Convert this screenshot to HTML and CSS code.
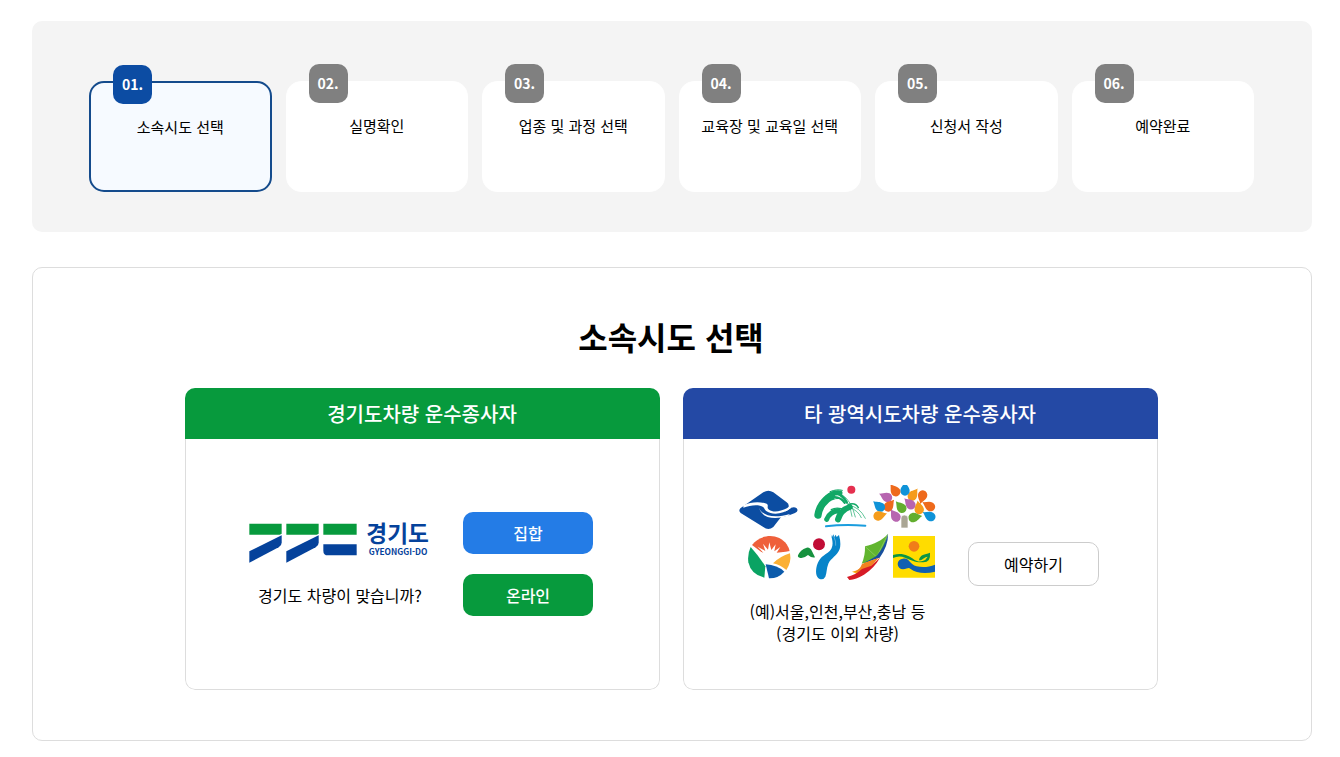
FILE: index.html
```html
<!DOCTYPE html>
<html lang="ko">
<head>
  <meta charset="UTF-8" />
  <meta name="viewport" content="width=device-width, initial-scale=1.0"/>
  <title>소속시도 선택</title>
  <link rel="stylesheet" href="styles.css">
</head>
<body>
  <div class="container">
    <ol class="steps">
      <li class="step active"><span class="num">01.</span>소속시도 선택</li>
      <li class="step"><span class="num">02.</span>실명확인</li>
      <li class="step"><span class="num">03.</span>업종 및 과정 선택</li>
      <li class="step"><span class="num">04.</span>교육장 및 교육일 선택</li>
      <li class="step"><span class="num">05.</span>신청서 작성</li>
      <li class="step"><span class="num">06.</span>예약완료</li>
    </ol>

    <main class="content">
      <h2>소속시도 선택</h2>
      <div class="cards">
        <section class="card">
          <h3 class="green">경기도차량 운수종사자</h3>
          <div class="card-body">
            <div class="info">
              <svg class="logo-gg" viewBox="27 39 546 123" role="img" aria-label="경기도">
                <g fill="#079a3d">
                  <path d="M28 41H125V71L119 74H28Z"/>
                  <path d="M139 41H236V71L230 74H139Z"/>
                  <path d="M250 41H350V74H250Z"/>
                </g>
                <g fill="#05429b">
                  <path d="M125 76V98Q125 107 116 112L28 158V124Z"/>
                  <path d="M236 76V98Q236 107 227 112L139 158V124Z"/>
                  <path d="M250 103H350V136H264Q250 136 250 122Z"/>
                  <text class="logo-name" x="379" y="96">경기도</text>
                  <text class="logo-sub" x="386" y="136">GYEONGGI-DO</text>
                </g>
              </svg>
              <p>경기도 차량이 맞습니까?</p>
            </div>
            <div class="buttons">
              <button class="button blue" type="button">집합</button>
              <button class="button green" type="button">온라인</button>
            </div>
          </div>
        </section>

        <section class="card">
          <h3 class="navy">타 광역시도차량 운수종사자</h3>
          <div class="card-body">
            <div class="info">
              <svg class="logo-city" viewBox="0 0 591 285" aria-hidden="true">
                <defs>
                  <path id="drop" d="M0 -24C3 -15 14 -8 14 4A14 14 0 0 1 -14 4C-14 -7 -5 -13 0 -24Z"/>
                </defs>

                <!-- diamond -->
                <g transform="translate(-15 -12)">
                  <path fill="#0c4da2" d="M88 34Q103 24 118 34L158 64Q167 70 163 80L118 138Q103 150 88 138L20 96Q12 88 20 81Z"/>
                  <path fill="#0c4da2" d="M76 78C96 100 134 104 163 86Q178 74 188 82Q195 91 183 96C160 106 134 112 108 110Z"/>
                  <path fill="#fff" d="M28 73C50 62 78 61 98 68C106 73 96 80 105 86C118 95 142 93 168 76L170 82C146 101 114 102 98 91C88 83 92 77 78 74C60 71 45 75 28 80Z"/>
                  <path fill="#fff" d="M74 76C80 104 118 114 168 99L162 105C118 117 82 112 74 76Z"/>
                </g>

                <!-- hills -->
                <g transform="translate(165 -12)" fill="none" stroke-linecap="round">
                  <path stroke="#12a866" stroke-width="22" d="M72 102C75 80 90 56 112 46"/>
                  <path stroke="#12a866" stroke-width="15" d="M98 50C112 38 126 34 138 36"/>
                  <path stroke="#12a866" stroke-width="3" d="M108 32C122 26 134 25 145 28M115 56Q138 46 152 60"/>
                  <path stroke="#12a866" stroke-width="8" d="M126 36C142 41 151 50 158 64"/>
                  <path stroke="#12a866" stroke-width="6" d="M118 48C134 46 145 55 152 66"/>
                  <path stroke="#12a866" stroke-width="15" d="M98 115C104 99 116 91 132 89"/>
                  <path stroke="#12a866" stroke-width="18" d="M132 115C138 96 152 83 167 78"/>
                  <path stroke="#12a866" stroke-width="4" d="M112 86Q124 79 142 83M163 70Q185 64 193 80"/>
                  <path stroke="#12a866" stroke-width="2" d="M145 42Q172 58 184 108M165 74Q196 76 214 112M168 80Q192 88 202 110M158 62Q172 82 174 106"/>
                  <path stroke="#1a9dde" stroke-width="6" d="M96 136Q150 129 214 134"/>
                  <circle fill="#e5304f" cx="172" cy="26" r="12"/>
                </g>

                <!-- tree -->
                <g transform="translate(285 -12)">
                  <use href="#drop" fill="#f59c1c" transform="translate(237 42) rotate(35)"/>
                  <use href="#drop" fill="#0f93d8" transform="translate(213 26)"/>
                  <use href="#drop" fill="#ee6a1c" transform="translate(183 29) rotate(-35)"/>
                  <use href="#drop" fill="#b765b0" transform="translate(157 48) rotate(-65)"/>
                  <use href="#drop" fill="#ee6a1c" transform="translate(265 46) rotate(195)"/>
                  <use href="#drop" fill="#b765b0" transform="translate(228 69) rotate(-45)"/>
                  <use href="#drop" fill="#ee6a1c" transform="translate(165 75) rotate(40)"/>
                  <use href="#drop" fill="#62ae2e" transform="translate(201 79) rotate(-40)"/>
                  <use href="#drop" fill="#0f93d8" transform="translate(136 76) rotate(-50)"/>
                  <use href="#drop" fill="#f59c1c" transform="translate(136 104) rotate(75)"/>
                  <use href="#drop" fill="#b765b0" transform="translate(184 105) rotate(-35)"/>
                  <use href="#drop" fill="#f59c1c" transform="translate(255 82) rotate(-10)"/>
                  <use href="#drop" fill="#ee6a1c" transform="translate(286 75) rotate(-60)"/>
                  <use href="#drop" fill="#0f93d8" transform="translate(287 105) rotate(-60)"/>
                  <use href="#drop" fill="#62ae2e" transform="translate(241 109) rotate(80)"/>
                  <path fill="#aaa695" stroke="#fff" stroke-width="2" d="M201 141V111Q201 102 211 102Q222 102 222 111V141Z"/>
                </g>

                <!-- sunrise -->
                <g transform="translate(-15 -12)">
                  <path fill="#ef603b" d="M54 192C80 158 133 155 158 190Q165 200 167 211L120 221L90 219Z"/>
                  <path fill="#fff" d="M58 206L88 215L71 197L94 210L87 188L102 206L106 184L112 207L125 190L121 211L139 198L128 215L168 211L170 222L120 248H92Z"/>
                  <path fill="#0aa363" d="M50 198Q72 222 94 256L91 290Q51 281 43 244Q40 218 50 198Z"/>
                  <path fill="#fbb034" d="M168 217Q173 244 157 267Q140 252 117 247Q138 226 168 217Z"/>
                  <path fill="#0c5bab" d="M95 250Q130 252 151 272Q132 293 105 292Z"/>
                </g>

                <!-- dancer -->
                <g transform="translate(165 138)">
                  <circle fill="#c10d36" cx="75" cy="40" r="18"/>
                  <path fill="#16923f" d="M12 73Q18 57 38 50Q48 48 54 61L63 79Q54 82 42 72Q29 83 19 81Q10 79 12 73Z"/>
                  <path fill="#0784c9" d="M110 10L114 18L118 10L121 18L125 11L128 18L135 12Q142 38 137 54C130 74 112 80 103 98C97 112 99 124 94 137Q88 148 77 144Q63 138 67 111C71 86 85 75 101 65C121 52 117 30 110 10Z"/>
                  <path fill="none" stroke="#fff" stroke-width="1" d="M119 16Q127 32 125 44"/>
                </g>

                <!-- sail -->
                <g transform="translate(285 -12)">
                  <path fill="#fbb916" d="M54 272Q82 268 92 243L130 233Q106 266 76 281Z"/>
                  <path fill="#61b52f" d="M93 196C119 190 145 178 162 158C156 185 145 215 125 230Q108 241 83 248Q94 225 93 196Z"/>
                  <path fill="none" stroke="#cfe6b4" stroke-width="1" d="M94 197L128 228L162 159"/>
                  <path fill="#174f9d" d="M162 159Q163 194 137 230L87 247Q116 232 128 224Q151 199 162 159Z"/>
                  <path fill="#f18220" d="M84 249L134 230L112 255Q82 275 59 273Q77 268 84 249Z"/>
                  <path fill="#d71b26" d="M139 229Q120 263 90 281Q66 295 46 297L39 288Q68 280 84 264L112 254Z"/>
                </g>

                <!-- field -->
                <g transform="translate(285 -12)">
                  <path fill="#ffdc00" d="M177 165H303V290H177Z"/>
                  <circle fill="#f07d19" cx="240" cy="196" r="16"/>
                  <path fill="#0b9444" d="M177 222C205 214 224 224 241 236C249 241 257 243 266 240Q276 237 281 227C269 229 264 239 255 238C258 219 272 222 288 215Q291 246 265 244C245 245 228 236 213 230Q195 222 177 231Z"/>
                  <path fill="#1160b0" d="M207 233C227 229 225 250 248 256C267 260 285 258 303 251V272C276 279 246 277 230 264C223 258 220 264 207 265A16 16 0 0 1 207 233Z"/>
                </g>
              </svg>
              <p>(예)서울,인천,부산,충남 등<br/>(경기도 이외 차량)</p>
            </div>
            <button class="button outline" type="button">예약하기</button>
          </div>
        </section>
      </div>
    </main>
  </div>
</body>
</html>
```
FILE: styles.css
```css
* {
  box-sizing: border-box;
}

body {
  margin: 0;
  background-color: #fff;
  color: #000;
  font-family: "Noto Sans CJK KR", "Noto Sans", sans-serif;
  font-size: 16px;
  line-height: 22px;
}

.container {
  margin: 0 28px 0 32px;
  padding: 21px 0 16px;
}

.steps {
  display: grid;
  grid-template-columns: repeat(6, 1fr);
  gap: 14px;
  margin: 0 0 35px;
  padding: 60px 58px 40px 57px;
  list-style: none;
  background-color: #f4f4f4;
  border-radius: 10px;
}

.step {
  position: relative;
  min-height: 111px;
  padding: 33px 0;
  border: 1px solid #fff;
  border-radius: 15px;
  background-color: #fff;
  font-size: 15px;
  text-align: center;
}

.step.active {
  border: 2px solid #144b8c;
  background-color: #f6faff;
}

.num {
  position: absolute;
  top: -18px;
  left: 22px;
  width: 39px;
  height: 39px;
  border-radius: 10px;
  background-color: #808080;
  color: #fff;
  font-size: 14px;
  font-weight: 700;
  line-height: 39px;
}

.active .num {
  background-color: #0c4ca3;
}

.content {
  padding: 44px 26px 50px 24px;
  border: 1px solid #ddd;
  border-radius: 10px;
}

h2 {
  margin: 0 0 28px;
  font-size: 32px;
  line-height: 48px;
  text-align: center;
}

.cards {
  display: grid;
  grid-template-columns: 1fr 1fr;
  gap: 23px;
  max-width: 973px;
  margin: 0 auto;
}

.card {
  display: flex;
  flex-direction: column;
  overflow: hidden;
  border-radius: 10px;
}

h3 {
  margin: 0;
  color: #fff;
  font-size: 20px;
  font-weight: 500;
  line-height: 51px;
  text-align: center;
}

.green {
  background-color: #079a3d;
}

.navy {
  background-color: #2449a5;
}

.blue {
  background-color: #247ce6;
}

.card-body {
  display: flex;
  flex: 1;
  align-items: center;
  justify-content: center;
  gap: 32px;
  min-height: 251px;
  padding-right: 2px;
  border: 1px solid #ddd;
  border-top: none;
  border-radius: 0 0 10px 10px;
}

.info {
  text-align: center;
}

.info p {
  margin: 0;
}

.logo-gg {
  display: block;
  width: 182px;
  height: 41px;
  margin-bottom: 20px;
  overflow: visible;
}

.logo-name {
  font-size: 68px;
  font-weight: 700;
}

.logo-sub {
  font-size: 25px;
  font-weight: 700;
}

.logo-city {
  display: block;
  width: 197px;
  height: 95px;
  margin-bottom: 20px;
}

.buttons {
  display: flex;
  flex-direction: column;
  gap: 20px;
}

.button {
  width: 130px;
  height: 42px;
  padding: 0;
  border: none;
  border-radius: 10px;
  color: #fff;
  font-family: inherit;
  font-size: 16px;
  font-weight: 500;
  cursor: pointer;
}

.button.outline {
  width: 131px;
  height: 44px;
  border: 1px solid #ccc;
  background-color: #fff;
  color: #000;
  font-weight: 400;
}
```
